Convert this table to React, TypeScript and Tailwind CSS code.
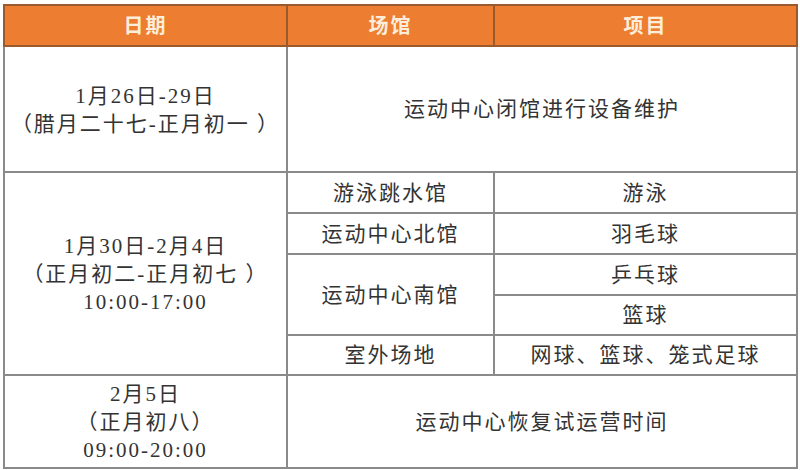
import React from 'react';

const font = { fontFamily: '"Liberation Serif", "Noto Sans CJK SC", serif' };

const cell = 'border-2 border-[#8a8a8a] text-center align-middle p-0';

const App = () => {
  return (
    <div className="w-[800px] h-[470px] bg-white pt-[4px] pl-[3px]" style={font}>
      <table className="border-collapse table-fixed w-[793px] text-[21px] leading-[28px] tracking-[2px] text-[#333333]">
        <colgroup>
          <col className="w-[283px]" />
          <col className="w-[207px]" />
          <col className="w-[303px]" />
        </colgroup>
        <thead>
          <tr className="h-[41px] bg-[#ed7d31] text-[#fdeedb] text-[20px]">
            <th className="border-2 border-[#9b5a2c] font-bold">日期</th>
            <th className="border-2 border-[#9b5a2c] font-bold">场馆</th>
            <th className="border-2 border-[#9b5a2c] font-bold">项目</th>
          </tr>
        </thead>
        <tbody>
          <tr className="h-[126px]">
            <td className={cell}>
              <div className="pt-[2px]">1月26日-29日</div>
              <div>（腊月二十七-正月初一 ）</div>
            </td>
            <td className={cell} colSpan={2}>
              运动中心闭馆进行设备维护
            </td>
          </tr>
          <tr className="h-[41px]">
            <td className={cell} rowSpan={5}>
              <div>1月30日-2月4日</div>
              <div>（正月初二-正月初七 ）</div>
              <div>10:00-17:00</div>
            </td>
            <td className={cell}>游泳跳水馆</td>
            <td className={cell}>游泳</td>
          </tr>
          <tr className="h-[41px]">
            <td className={cell}>运动中心北馆</td>
            <td className={cell}>羽毛球</td>
          </tr>
          <tr className="h-[41px]">
            <td className={cell} rowSpan={2}>运动中心南馆</td>
            <td className={cell}>乒乓球</td>
          </tr>
          <tr className="h-[40px]">
            <td className={cell}>篮球</td>
          </tr>
          <tr className="h-[40px]">
            <td className={cell}>室外场地</td>
            <td className={cell}>网球、篮球、笼式足球</td>
          </tr>
          <tr className="h-[93px]">
            <td className={cell}>
              <div>2月5日</div>
              <div>（正月初八）</div>
              <div>09:00-20:00</div>
            </td>
            <td className={cell} colSpan={2}>
              运动中心恢复试运营时间
            </td>
          </tr>
        </tbody>
      </table>
    </div>
  );
};

export default App;
